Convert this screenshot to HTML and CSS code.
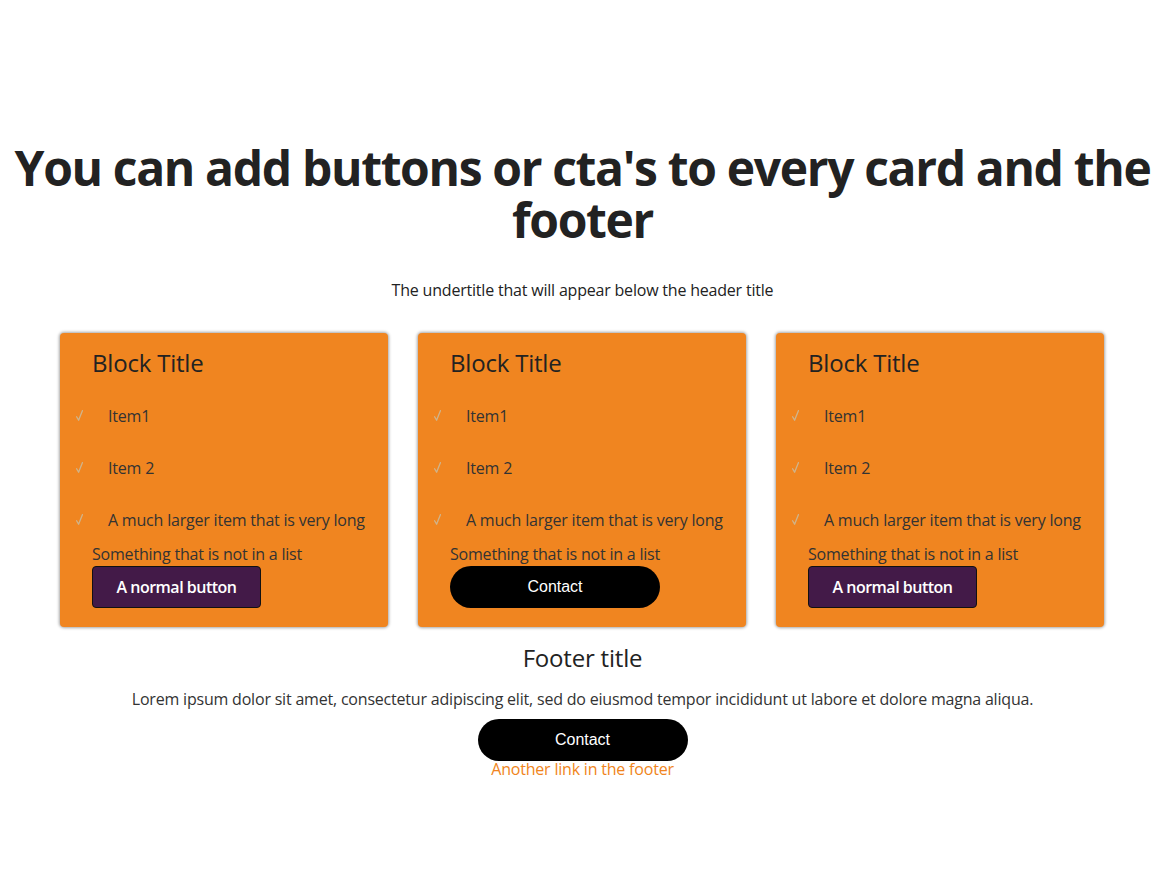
FILE: index.html
```html
<!DOCTYPE html>
<html lang="en">
<head>
<meta charset="utf-8">
<title>Cards</title>
<link rel="stylesheet" href="styles.css">
</head>
<body>
<header class="hero">
  <h1 class="hero-title">You can add buttons or cta's to every card and the footer</h1>
  <p class="hero-sub">The undertitle that will appear below the header title</p>
</header>
<main class="cards">
  <section class="card">
    <h2 class="card-title">Block Title</h2>
    <ul class="card-list">
      <li><svg class="check" viewBox="0 0 7 11" width="7" height="11"><polyline points="0.6,6.8 2.6,10.3 6.5,0.6"/></svg>Item1</li>
      <li><svg class="check" viewBox="0 0 7 11" width="7" height="11"><polyline points="0.6,6.8 2.6,10.3 6.5,0.6"/></svg>Item 2</li>
      <li><svg class="check" viewBox="0 0 7 11" width="7" height="11"><polyline points="0.6,6.8 2.6,10.3 6.5,0.6"/></svg>A much larger item that is very long</li>
    </ul>
    <p class="card-note">Something that is not in a list</p>
    <button class="btn-normal">A normal button</button>
  </section>
  <section class="card">
    <h2 class="card-title">Block Title</h2>
    <ul class="card-list">
      <li><svg class="check" viewBox="0 0 7 11" width="7" height="11"><polyline points="0.6,6.8 2.6,10.3 6.5,0.6"/></svg>Item1</li>
      <li><svg class="check" viewBox="0 0 7 11" width="7" height="11"><polyline points="0.6,6.8 2.6,10.3 6.5,0.6"/></svg>Item 2</li>
      <li><svg class="check" viewBox="0 0 7 11" width="7" height="11"><polyline points="0.6,6.8 2.6,10.3 6.5,0.6"/></svg>A much larger item that is very long</li>
    </ul>
    <p class="card-note">Something that is not in a list</p>
    <button class="btn-pill">Contact</button>
  </section>
  <section class="card">
    <h2 class="card-title">Block Title</h2>
    <ul class="card-list">
      <li><svg class="check" viewBox="0 0 7 11" width="7" height="11"><polyline points="0.6,6.8 2.6,10.3 6.5,0.6"/></svg>Item1</li>
      <li><svg class="check" viewBox="0 0 7 11" width="7" height="11"><polyline points="0.6,6.8 2.6,10.3 6.5,0.6"/></svg>Item 2</li>
      <li><svg class="check" viewBox="0 0 7 11" width="7" height="11"><polyline points="0.6,6.8 2.6,10.3 6.5,0.6"/></svg>A much larger item that is very long</li>
    </ul>
    <p class="card-note">Something that is not in a list</p>
    <button class="btn-normal">A normal button</button>
  </section>
</main>
<footer class="footer">
  <h2 class="footer-title">Footer title</h2>
  <p class="footer-text">Lorem ipsum dolor sit amet, consectetur adipiscing elit, sed do eiusmod tempor incididunt ut labore et dolore magna aliqua.</p>
  <button class="btn-pill">Contact</button>
  <a class="footer-link" href="#">Another link in the footer</a>
</footer>
</body>
</html>
```
FILE: styles.css
```css
* { box-sizing: border-box; }
body {
  margin: 0;
  padding-left: 5px;
  font-family: "Open Sans", "DejaVu Sans", sans-serif;
  letter-spacing: -0.2px;
  color: #333;
  background: #fff;
}
.hero {
  padding-top: 142px;
  text-align: center;
}
.hero-title {
  margin: 0;
  font-size: 48px;
  line-height: 52px;
  font-weight: 700;
  letter-spacing: -1.35px;
  color: #222;
}
.hero-sub {
  margin: 34px 0 0;
  font-size: 16px;
  line-height: 20px;
  color: #222;
}
.cards {
  display: flex;
  gap: 30px;
  margin: 33px 55px 0 55px;
}
.card {
  width: 328px;
  height: 294px;
  background: #f08520;
  border-radius: 4px;
  box-shadow: 0 0 3px 1px rgba(0,0,0,0.35);
  padding: 16px 8px 0 32px;
  display: flex;
  flex-direction: column;
  align-items: flex-start;
}
.card-title {
  margin: 0;
  font-size: 24px;
  line-height: 28px;
  font-weight: 400;
  color: #222;
}
.card-list {
  list-style: none;
  margin: 13px 0 0 -16px;
  padding: 0;
}
.card-list li {
  display: flex;
  align-items: center;
  height: 52px;
  font-size: 16px;
  white-space: nowrap;
}
.check {
  flex: none;
  margin-right: 25px;
  margin-top: -1px;
  fill: none;
  stroke: #cfb48c;
  stroke-width: 1.3;
  stroke-linecap: round;
  stroke-linejoin: round;
}
.card-note {
  margin: 0;
  font-size: 16px;
  line-height: 17px;
}
.btn-normal {
  margin-top: 3px;
  height: 42px;
  width: 169px;
  background: #431a48;
  color: #fff;
  border: 1px solid #111;
  border-radius: 4px;
  font-family: inherit;
  letter-spacing: -0.5px;
  font-size: 16px;
  font-weight: 600;
}
.btn-pill {
  margin-top: 3px;
  height: 42px;
  width: 210px;
  background: #000;
  color: #fff;
  border: 0;
  border-radius: 21px;
  font-family: "Liberation Sans", Arial, sans-serif;
  letter-spacing: 0;
  font-size: 16px;
}
.footer {
  text-align: center;
  display: flex;
  flex-direction: column;
  align-items: center;
  padding-top: 17px;
}
.footer-title {
  margin: 0;
  font-size: 24px;
  line-height: 28px;
  font-weight: 400;
  color: #222;
}
.footer-text {
  margin: 17px 0 0;
  font-size: 16px;
  line-height: 20px;
}
.footer .btn-pill { margin-top: 10px; }
.footer-link {
  color: #f08520;
  text-decoration: none;
  font-size: 16px;
  line-height: 17px;
}
```
